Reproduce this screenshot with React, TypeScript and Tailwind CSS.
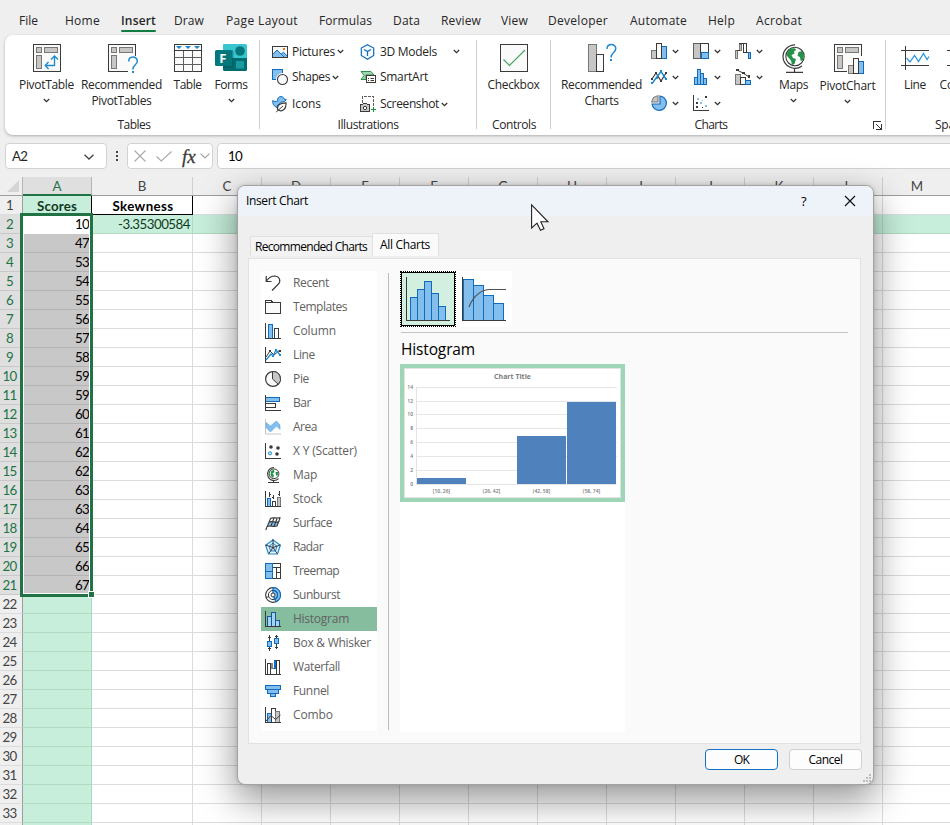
import { useLayoutEffect, useRef, useState } from "react";
import type { ReactNode } from "react";

const DARK = "#3b3a39";
const BLUE = "#0f6cbd";
const LIGHT = "#83beec";
const GREY = "#c8c6c4";

/* One line of text whose tracking is adjusted so that it spans w pixels. */
function T({ w, className = "", children }: { w: number; className?: string; children: string }) {
  const ref = useRef<HTMLSpanElement>(null);
  const [space, setSpace] = useState(0);
  useLayoutEffect(() => {
    if (ref.current) {
      setSpace((w - ref.current.getBoundingClientRect().width) / children.length);
    }
  }, [w, children]);
  return (
    <span ref={ref} style={{ letterSpacing: space }} className={`inline-block whitespace-nowrap ${className}`}>
      {children}
    </span>
  );
}

function Svg({ w, h, children, className = "", smooth = false }: { w: number; h: number; children: ReactNode; className?: string; smooth?: boolean }) {
  return (
    <svg
      width={w}
      height={h}
      viewBox={`0 0 ${w} ${h}`}
      fill="none"
      shapeRendering={smooth ? "auto" : "crispEdges"}
      className={`block shrink-0 overflow-visible ${className}`}
    >
      {children}
    </svg>
  );
}

function Chevron({ className = "" }: { className?: string }) {
  return (
    <Svg w={7} h={5} smooth className={className}>
      <path d="M0.8 1 L3.5 3.6 L6.2 1" stroke="#333" strokeWidth="1.3" />
    </Svg>
  );
}

/* ---------- ribbon icons ---------- */

function PivotBase() {
  return (
    <>
      <rect x="0.5" y="0.5" width="27" height="27" fill="#fafafa" stroke={DARK} />
      <rect x="3.5" y="3.5" width="5" height="5" fill={GREY} stroke="#797774" />
      <rect x="11.5" y="3.5" width="13" height="5" fill={GREY} stroke="#797774" />
      <rect x="3.5" y="11.5" width="5" height="13" fill={GREY} stroke="#797774" />
    </>
  );
}
const PivotTableIcon = () => (
  <Svg w={28} h={28}>
    <PivotBase />
    <g stroke="#1e8bcd" strokeWidth="1.4" shapeRendering="auto">
      <path d="M13 21.5 H21.5 V12.5" />
      <path d="M15.5 18 L12.3 21.5 L15.5 25" />
      <path d="M18 15.5 L21.5 12 L25 15.5" />
    </g>
  </Svg>
);
const RecPivotIcon = () => (
  <Svg w={27} h={28}>
    <PivotBase />
    <path d="M20 28 V17 L23 12 H29 V28 Z" fill="#fff" />
    <path d="M20.7 17.5 C20.7 11.8 29.3 11.6 29.3 17.2 C29.3 20.8 24.8 20.8 24.8 25.5" stroke="#1e8bcd" strokeWidth="1.5" shapeRendering="auto" />
    <rect x="24" y="27" width="2" height="2" fill="#1e8bcd" />
  </Svg>
);
const TableIcon = () => (
  <Svg w={28} h={28}>
    <rect x="0.5" y="0.5" width="27" height="27" fill="#fafafa" stroke={DARK} />
    <path d="M0 6.5 H28 M0 13.5 H28 M0 20.5 H28 M9.5 7 V28 M18.5 7 V28" stroke="#605e5c" />
    <path d="M0 6.5 H28" stroke={DARK} />
    <path d="M2 2 H8 L5 5 Z M11 2 H17 L14 5 Z M20 2 H26 L23 5 Z" fill="#1e8bcd" shapeRendering="auto" />
  </Svg>
);
const FormsIcon = () => (
  <Svg w={32} h={28} smooth>
    <path d="M9 0 H30.5 Q32 0 32 1.5 V14 H8 V1 Q8 0 9 0" fill="#37c6d0" />
    <path d="M8 14 H32 V25.5 Q32 27 30.5 27 H9.5 Q8 27 8 25.5 Z" fill="#026d71" />
    <circle cx="25" cy="7" r="4.8" fill="#08777c" />
    <rect x="21" y="17" width="8" height="7.5" rx="0.5" fill="#1a9ba1" />
    <path d="M8 6 H17 Q18.5 6 18.5 8 V22 Q18.5 24 17 24 H8 Z" fill="#02565a" opacity="0.5" />
    <rect x="0" y="6" width="17" height="16" rx="1.5" fill="#03787c" />
    <text x="4.3" y="18.6" fill="#fff" fontSize="13" fontWeight="700" fontFamily="Open Sans, sans-serif">F</text>
  </Svg>
);
const PicturesIcon = () => (
  <Svg w={16} h={14} smooth>
    <rect x="0.5" y="1.5" width="15" height="11" fill="#fafafa" stroke={DARK} />
    <path d="M1 9 L5 4.8 L11 12 H1 Z" fill={LIGHT} />
    <path d="M9 9 L11.5 7.5 L15 11 V12 H11 Z" fill={LIGHT} />
    <path d="M1 9.2 L5 5 L12 12 M9.2 9.2 L11.5 7.2 L15 11" stroke={BLUE} />
    <rect x="11" y="3" width="2" height="2" fill="#e8742a" />
  </Svg>
);
const ShapesIcon = () => (
  <Svg w={16} h={16}>
    <rect x="0.5" y="0.5" width="10" height="10" fill={LIGHT} stroke={BLUE} />
    <circle cx="10.5" cy="10.5" r="6.5" fill="#fff" shapeRendering="auto" />
    <circle cx="10.5" cy="10.5" r="5" fill="#fafafa" stroke={DARK} strokeWidth="1.1" shapeRendering="auto" />
  </Svg>
);
const IconsIcon = () => (
  <Svg w={16} h={16} smooth>
    <path d="M0.7 4.5 C2 5.5 4 5.8 5.8 5 C5 2 7 0.6 9 0.6 C11 0.6 11.8 2 12 3 L14.3 3.6 L12.5 5.5 C9 5.5 6 7.5 5 11.5 C2 10.5 0.3 7.5 0.7 4.5 Z" fill={LIGHT} stroke={BLUE} />
    <path d="M14 6.8 C7.5 7 4.5 9.5 5.7 13.8 C9 16 14.5 14.5 14 6.8 Z" fill="#fff" stroke={DARK} strokeWidth="1.2" />
    <path d="M4.2 16 L11 10" stroke={DARK} />
  </Svg>
);
const ModelsIcon = () => (
  <Svg w={15} h={16} smooth>
    <path d="M7.5 0.8 L13.7 4 V11.4 L7.5 15.2 L1.3 11.4 V4 Z" fill="#f7fbfe" stroke={BLUE} strokeWidth="1.2" />
    <path d="M4 5.5 L7.5 7.5 L11 5.5 M7.5 7.5 V12" stroke={BLUE} strokeWidth="1.2" />
  </Svg>
);
const SmartArtIcon = () => (
  <Svg w={16} h={14} smooth>
    <path d="M1 1.5 H11 L14 5 H6 V9.5 H1 L4.2 5.5 Z" fill="#9fd6ae" stroke="#2d8f4e" />
    <rect x="6.5" y="5.5" width="9" height="7" fill="#fff" stroke={DARK} />
    <path d="M8 8.5 H9 M10.5 8.5 H14 M8 10.5 H9 M10.5 10.5 H14" stroke={DARK} />
  </Svg>
);
const ScreenshotIcon = () => (
  <Svg w={16} h={16}>
    <path d="M2.5 7 V0.5 H13.5 V10" stroke="#605e5c" strokeDasharray="3 1" />
    <path d="M0.5 8.5 H2.5 L3.5 7.5 H6.5 L7.5 8.5 H9.5 V15.5 H0.5 Z" fill={GREY} stroke={DARK} />
    <circle cx="5" cy="12" r="1.7" fill="#fff" stroke={DARK} shapeRendering="auto" />
    <path d="M11 13.5 H16 M13.5 11 V16" stroke="#1d9440" />
  </Svg>
);
const CheckboxIcon = () => (
  <Svg w={28} h={28}>
    <rect x="0.5" y="0.5" width="27" height="27" fill="#fafafa" stroke={DARK} />
    <path d="M3.5 15.5 L9.5 21.5 L25 6" stroke="#45a562" strokeWidth="1.2" shapeRendering="auto" />
  </Svg>
);
const RecChartsIcon = () => (
  <Svg w={28} h={28}>
    <rect x="0.5" y="0.5" width="8" height="27" fill={GREY} stroke="#797774" />
    <rect x="8.5" y="10.5" width="7" height="17" fill="#fafafa" stroke={DARK} />
    <path d="M19 5 C19 -0.8 27.8 -0.8 27.8 4.6 C27.8 8.6 23 8.4 23 13.5" stroke="#1e8bcd" strokeWidth="1.5" shapeRendering="auto" />
    <rect x="22" y="15" width="2" height="2" fill="#1e8bcd" />
  </Svg>
);
const ColumnChartIcon = () => (
  <Svg w={16} h={16}>
    <rect x="0.5" y="7.5" width="5" height="8" fill={GREY} stroke="#797774" />
    <rect x="10.5" y="3.5" width="5" height="12" fill={LIGHT} stroke={BLUE} />
    <rect x="5.5" y="0.5" width="5" height="15" fill="#fafafa" stroke={DARK} />
  </Svg>
);
const TreemapChartIcon = () => (
  <Svg w={16} h={16}>
    <rect x="0.5" y="0.5" width="7" height="15" fill={GREY} stroke="#605e5c" />
    <rect x="7.5" y="0.5" width="8" height="9" fill="#fafafa" stroke={DARK} />
    <rect x="8.5" y="9.5" width="7" height="6" fill={LIGHT} stroke={BLUE} />
  </Svg>
);
const WaterfallChartIcon = () => (
  <Svg w={16} h={16}>
    <rect x="0.5" y="7.5" width="2" height="8" fill={GREY} stroke="#797774" />
    <rect x="4.5" y="1.5" width="2" height="6" fill={GREY} stroke="#797774" />
    <path d="M4 0.5 H11.5 M2 7.5 H5 M8.5 0.5 V9.5 H11.5 V0.5 M11 9.5 H14" stroke={DARK} />
    <rect x="13.5" y="9.5" width="2" height="6" fill={LIGHT} stroke={BLUE} />
  </Svg>
);
const LineChartIcon = () => (
  <Svg w={16} h={15} smooth>
    <path d="M1 9 L5 3 L10 11 L15 3" stroke={DARK} strokeWidth="1.2" />
    <path d="M1 13.5 L10 1.5 L15 9" stroke="#1e8bcd" strokeWidth="1.5" />
    <path d="M4 2h2v2h-2z M9 10h2v2h-2z M14 2h2v2h-2z M0 8h2v2h-2z" fill={DARK} />
    <path d="M9 0h2v2h-2z M14 8h2v2h-2z M0 12h2v2h-2z M5 7h2v2h-2z" fill="#1e8bcd" />
  </Svg>
);
const HistChartIcon = () => (
  <Svg w={14} h={16}>
    <path d="M1.5 15.5 V8.5 H4.5 V15.5 Z M4.5 15.5 V0.5 H7.5 V15.5 Z M7.5 15.5 V4.5 H10.5 V15.5 Z M10.5 15.5 V9.5 H13.5 V15.5 Z" fill={LIGHT} stroke={BLUE} />
  </Svg>
);
const ComboChartIcon = () => (
  <Svg w={16} h={16}>
    <rect x="0.5" y="5.5" width="5" height="10" fill={GREY} stroke="#797774" />
    <rect x="5.5" y="8.5" width="5" height="7" fill="#fafafa" stroke={DARK} />
    <rect x="10.5" y="11.5" width="5" height="4" fill={LIGHT} stroke={BLUE} />
    <path d="M2 1 L8 4 L14 8" stroke={DARK} shapeRendering="auto" />
    <path d="M1 0h3v2h-3z M7 3h3v2h-3z M13 6h2v3h-2z" fill={DARK} />
  </Svg>
);
const PieChartIcon = () => (
  <Svg w={16} h={16} smooth>
    <path d="M9 1 A7.2 7.2 0 1 1 1 9 H9 Z" fill={LIGHT} stroke={BLUE} strokeWidth="1.2" />
    <path d="M7 7 H0.7 A7 7 0 0 1 7 0.7 Z" fill={GREY} stroke="#797774" strokeWidth="1.1" />
  </Svg>
);
const ScatterChartIcon = () => (
  <Svg w={16} h={16}>
    <path d="M0.5 0 V15.5 H16" stroke={DARK} />
    <path d="M3 7h2v2h-2z M12 1h2v2h-2z M3 11h2v2h-2z M9 12h1v1h-1z" fill={DARK} />
    <path d="M4 3h2v2h-2z M7 7h2v2h-2z M9 5h1v1h-1z M12 10h2v2h-2z" fill={LIGHT} />
  </Svg>
);
function Globe({ w, h }: { w: number; h: number }) {
  return (
    <svg width={w} height={h} viewBox="0 0 24 29" fill="none" className="block shrink-0 overflow-visible">
      <circle cx="13" cy="12.5" r="9.2" fill="#fff" stroke={DARK} strokeWidth="1.1" />
      <path d="M8 5 C11 3.5 14 4 14 6 L12 7.5 L12.5 9.5 L9.5 11 L11 14 L14 15 L12.5 20 L10 21 L9 16.5 L5 12 C4.5 9 6 6.5 8 5 Z M16.5 8 L20 7 C22 10 22.5 13 20.5 17 L18.5 16.5 L18 13 L15.5 12 Z" fill="#239449" />
      <path d="M13 0.8 A12 12 0 0 0 1 12.5 A12 12 0 0 0 20 22" stroke={DARK} strokeWidth="1.2" />
      <path d="M12.5 24.5 V28 M4 28.3 H21" stroke={DARK} strokeWidth="1.2" />
    </svg>
  );
}
const MapTypeIcon = () => (
  <Svg w={16} h={16} smooth>
    <circle cx="9" cy="6.8" r="4.9" fill="#fff" stroke={DARK} />
    <path d="M6 4 L9 2.8 L9.5 5 L7.5 6.5 L9 8.5 L8 11 L5.5 8.5 Z M10.5 5 L13 5 L12.8 8.5 L11 8.5 Z" fill="#239449" />
    <path d="M9 0.5 A6.5 6.5 0 1 0 13.6 11.6 M8.5 13 V15 M3 15.5 H14" stroke={DARK} strokeWidth="1.1" />
  </Svg>
);
const PivotChartIcon = () => (
  <Svg w={28} h={30}>
    <PivotBase />
    <path d="M13 31 V19 H18 V12 H31 V31 Z" fill="#fff" />
    <rect x="14.5" y="21.5" width="5" height="8" fill={GREY} stroke="#797774" />
    <rect x="24.5" y="17.5" width="5" height="12" fill={LIGHT} stroke={BLUE} />
    <rect x="19.5" y="14.5" width="5" height="15" fill="#fafafa" stroke={DARK} />
  </Svg>
);
const SparkLineIcon = () => (
  <Svg w={28} h={24}>
    <path d="M0 6.5 H28 M0 21.5 H28 M4.5 2 V26" stroke={DARK} />
    <path d="M5.5 14 L9 18 L13.5 11.5 L17.5 17.5 L22.5 9.5 L26 15.5 L28 12.5" stroke="#2f96dc" strokeWidth="1.3" shapeRendering="auto" />
  </Svg>
);

/* ---------- ribbon ---------- */

const ribbonTabs: { label: string; text: number; cell: number }[] = [
  { label: "File", text: 19, cell: 46 },
  { label: "Home", text: 35, cell: 56 },
  { label: "Insert", text: 35, cell: 53 },
  { label: "Draw", text: 30, cell: 52 },
  { label: "Page Layout", text: 72, cell: 93 },
  { label: "Formulas", text: 53, cell: 74 },
  { label: "Data", text: 27, cell: 48 },
  { label: "Review", text: 40, cell: 60 },
  { label: "View", text: 27, cell: 47 },
  { label: "Developer", text: 60, cell: 82 },
  { label: "Automate", text: 57, cell: 78 },
  { label: "Help", text: 27, cell: 48 },
  { label: "Acrobat", text: 46, cell: 60 },
];

function BigButton({ icon, lines, width, arrow = false, drop = false }: { icon: ReactNode; lines: [string, number][]; width: string; arrow?: boolean; drop?: boolean }) {
  return (
    <div className={`flex shrink-0 flex-col items-center ${width}`}>
      <div className={`flex items-start justify-center ${drop ? "h-[34px]" : "h-[33px]"}`}>{icon}</div>
      {lines.map(([t, w]) => (
        <div key={t} className="flex h-4 items-center justify-center">
          <T w={w}>{t}</T>
        </div>
      ))}
      {arrow && <Chevron className="mt-[5px]" />}
    </div>
  );
}

function SmallButton({ icon, label, w, gap }: { icon: ReactNode; label: string; w: number; gap?: string }) {
  return (
    <div className="flex h-[26px] items-center">
      <div className="flex w-5 items-center">{icon}</div>
      <T w={w}>{label}</T>
      {gap && <Chevron className={gap} />}
    </div>
  );
}

function Group({ width, label, w, children, pad = "" }: { width: string; label: string; w: number; children: ReactNode; pad?: string }) {
  return (
    <div className={`relative flex shrink-0 flex-col ${width}`}>
      <div className="flex h-[82px] pt-[9px]">{children}</div>
      <div className={`flex h-4 items-center justify-center ${pad}`}>
        <T w={w}>{label}</T>
      </div>
    </div>
  );
}
const Divider = () => <div className="mt-[5px] h-[89px] w-px shrink-0 bg-[#cfcfcf]" />;

function IconMenu({ icon }: { icon: ReactNode }) {
  return (
    <div className="flex h-[26px] w-[42px] items-center">
      <div className="w-[21px]">{icon}</div>
      <Chevron />
    </div>
  );
}

function Ribbon() {
  return (
    <div className="flex h-[100px] w-[960px] shrink-0 rounded-lg bg-white shadow-[0_1px_3px_rgba(0,0,0,0.28)]">
      <Group width="w-[254px]" label="Tables" w={33} pad="pl-[4px]">
        <BigButton width="w-[83px]" icon={<PivotTableIcon />} lines={[["PivotTable", 55]]} arrow />
        <BigButton width="w-[67px]" icon={<RecPivotIcon />} lines={[["Recommended", 81], ["PivotTables", 60]]} />
        <BigButton width="w-[65px]" icon={<TableIcon />} lines={[["Table", 28]]} />
        <BigButton width="w-[22px]" icon={<FormsIcon />} lines={[["Forms", 33]]} arrow />
      </Group>
      <Divider />
      <Group width="w-[216px]" label="Illustrations" w={61}>
        <div className="-mt-[5px] flex w-[88px] flex-col pl-3">
          <SmallButton icon={<PicturesIcon />} label="Pictures" w={43} gap="ml-[2px]" />
          <SmallButton icon={<ShapesIcon />} label="Shapes" w={38} gap="ml-[2px]" />
          <div className="pt-px"><SmallButton icon={<IconsIcon />} label="Icons" w={29} /></div>
        </div>
        <div className="-mt-[5px] flex w-[128px] flex-col pl-3">
          <SmallButton icon={<ModelsIcon />} label="3D Models" w={57} gap="ml-[16px]" />
          <SmallButton icon={<SmartArtIcon />} label="SmartArt" w={48} />
          <div className="pt-px"><SmallButton icon={<ScreenshotIcon />} label="Screenshot" w={59} gap="ml-[2px]" /></div>
        </div>
      </Group>
      <Divider />
      <Group width="w-[73px]" label="Controls" w={44} pad="pl-px">
        <BigButton width="w-[73px]" icon={<CheckboxIcon />} lines={[["Checkbox", 52]]} />
      </Group>
      <Divider />
      <Group width="w-[334px]" label="Charts" w={33} pad="pr-[14px]">
        <BigButton width="w-[101px]" icon={<RecChartsIcon />} lines={[["Recommended", 81], ["Charts", 34]]} />
        <div className="-mt-[6px] -ml-px grid h-[78px] w-[126px] grid-cols-3">
          <IconMenu icon={<ColumnChartIcon />} />
          <IconMenu icon={<TreemapChartIcon />} />
          <IconMenu icon={<WaterfallChartIcon />} />
          <IconMenu icon={<LineChartIcon />} />
          <IconMenu icon={<HistChartIcon />} />
          <IconMenu icon={<ComboChartIcon />} />
          <IconMenu icon={<PieChartIcon />} />
          <IconMenu icon={<ScatterChartIcon />} />
        </div>
        <BigButton width="w-[33px]" icon={<Globe w={24} h={29} />} lines={[["Maps", 29]]} arrow />
        <BigButton width="w-[75px]" icon={<PivotChartIcon />} lines={[["PivotChart", 56]]} arrow drop />
        <Svg w={9} h={9} className="absolute right-[3px] bottom-[5px]">
          <path d="M0.5 8 V0.5 H8 M8.5 3 V8.5 H3 M3 3 L8 8" stroke="#333" />
        </Svg>
      </Group>
      <Divider />
      <div className="flex w-[120px] flex-col">
        <div className="flex h-[82px] pt-[9px]">
          <BigButton width="w-[58px]" icon={<SparkLineIcon />} lines={[["Line", 22]]} />
          <BigButton width="w-[34px]" icon={<SparkLineIcon />} lines={[["Column", 43]]} />
        </div>
        <div className="flex h-4 items-center pl-[49px]">
          <T w={55}>Sparklines</T>
        </div>
      </div>
    </div>
  );
}

/* ---------- formula bar ---------- */

function FormulaBar() {
  return (
    <div className="flex h-[26px] w-[960px] shrink-0 items-center text-[12px]">
      <div className="flex h-[26px] w-[102px] items-center justify-between rounded border border-[#d2d2d2] bg-white pr-3 pl-[6px]">
        <T w={15} className="pt-px font-[Lato,sans-serif] text-[13.3px]">A2</T>
        <Svg w={10} h={6} smooth className="mt-[2px]"><path d="M0.5 0.7 L5 5 L9.5 0.7" stroke="#444" strokeWidth="1.3" /></Svg>
      </div>
      <div className="flex w-5 flex-col items-center gap-[2px]">
        <div className="size-[2px] bg-[#444]" />
        <div className="size-[2px] bg-[#444]" />
        <div className="size-[2px] bg-[#444]" />
      </div>
      <div className="flex h-[26px] w-[86px] items-center rounded border border-[#d2d2d2] bg-white pl-[6px]">
        <Svg w={12} h={12} smooth><path d="M0.5 0.5 L11.5 11.5 M11.5 0.5 L0.5 11.5" stroke="#a9a9a9" strokeWidth="1.1" /></Svg>
        <Svg w={16} h={11} smooth className="ml-[10px]"><path d="M0.5 5.5 L5.3 10 L15.5 0.5" stroke="#a9a9a9" strokeWidth="1.1" /></Svg>
        <span className="ml-[10px] w-[14px] font-['Liberation_Serif',serif] text-[19px] leading-none text-[#3b3a39] italic [-webkit-text-stroke:0.3px_#3b3a39]">fx</span>
        <Svg w={10} h={6} smooth className="ml-[4px]"><path d="M0.5 0.7 L5 5 L9.5 0.7" stroke="#a0a0a0" strokeWidth="1.1" /></Svg>
      </div>
      <div className="ml-1 flex h-[26px] flex-1 items-center rounded border border-[#d2d2d2] bg-white pt-px pl-[10px]">
        <T w={14} className="font-[Lato,sans-serif] text-[13.3px] text-black">10</T>
      </div>
    </div>
  );
}

/* ---------- sheet ---------- */

const scores = [10, 47, 53, 54, 55, 56, 57, 58, 59, 59, 60, 61, 62, 62, 63, 63, 64, 65, 66, 67];
const otherColumns = ["C", "D", "E", "F", "G", "H", "I", "J", "K", "L", "M"];
const rows = Array.from({ length: 34 }, (_, i) => i + 1);

function ScoreCell({ n }: { n: number }) {
  if (n === 1) {
    return (
      <div className="flex w-[69px] shrink-0 items-center justify-center border-r border-b border-black bg-[#c6eeda] pt-[3px] font-bold text-[#12391f]">
        <T w={40}>Scores</T>
      </div>
    );
  }
  if (n > 21) {
    return <div className="w-[69px] shrink-0 border-r border-b border-[#b0d9c2] bg-[#c6eeda]" />;
  }
  return (
    <div className={`flex w-[69px] shrink-0 items-center justify-end border-b pt-[2px] pr-[3px] text-black ${n === 2 ? "border-white bg-white" : "border-[#b3b3b3] bg-[#c8c8c8]"}`}>
      <T w={14}>{String(scores[n - 2])}</T>
    </div>
  );
}

function SheetRow({ n }: { n: number }) {
  const picked = n >= 2 && n <= 21;
  const cell = n === 2 ? "border-[#b0d9c2] bg-[#c6eeda]" : "border-[#dcdcdc] bg-white";
  return (
    <div className="flex h-[19px] shrink-0">
      <div className={`flex w-[23px] shrink-0 items-center justify-center border-r border-b border-r-[#9d9d9d] pt-[2px] pr-[3px] ${picked ? "border-b-[#c8c8c8] bg-[#dfdfdf] text-[#217346]" : "border-b-[#dcdcdc] bg-[#efefef] text-[#444]"}`}>
        {n < 34 && <T w={n < 10 ? 7 : 14}>{String(n)}</T>}
      </div>
      <ScoreCell n={n} />
      {n === 1 ? (
        <div className="flex w-[101px] shrink-0 items-center justify-center border-r border-b border-black bg-white pt-[3px] pl-[2px] font-bold text-black">
          <T w={61}>Skewness</T>
        </div>
      ) : (
        <div className={`flex w-[101px] shrink-0 items-center justify-end border-r border-b pt-[2px] pr-[2px] text-[#12391f] ${cell}`}>
          {n === 2 && <T w={72}>-3.35300584</T>}
        </div>
      )}
      {otherColumns.map((c) => (
        <div key={c} className={`w-[69px] shrink-0 border-r border-b ${cell}`} />
      ))}
    </div>
  );
}

function Sheet() {
  return (
    <div className="relative mt-2 w-[960px] font-[Lato,sans-serif] text-[13.3px] leading-none">
      <div className="flex h-[19px] border-b border-[#9d9d9d] text-[#444]">
        <div className="flex w-[23px] shrink-0 items-end justify-end border-r border-[#b5b5b5] pr-[3px] pb-[3px]">
          <Svg w={12} h={12} smooth><path d="M12 0 V12 H0 Z" fill="#d5d5d5" /></Svg>
        </div>
        <div className="flex h-[19px] w-[69px] shrink-0 items-center justify-center border-r border-b-2 border-r-[#b5b5b5] border-b-[#217346] bg-[#dfdfdf] pt-[3px] text-[#217346]">A</div>
        <div className="flex w-[101px] shrink-0 items-center justify-center border-r border-[#cfcfcf] pt-[2px]">B</div>
        {otherColumns.map((c) => (
          <div key={c} className="flex w-[69px] shrink-0 items-center justify-center border-r border-[#cfcfcf] pt-[2px]">{c}</div>
        ))}
      </div>
      {rows.map((n) => (
        <SheetRow key={n} n={n} />
      ))}
      <div className="absolute top-[36px] left-[20px] h-[384px] w-[73px] border-3 border-[#217346]">
        <div className="size-full border border-white" />
      </div>
      <div className="absolute top-[414px] left-[88px] size-[7px] border border-white bg-[#217346]" />
    </div>
  );
}

/* ---------- chart type icons ---------- */

const Axes = ({ c = DARK }: { c?: string }) => <path d="M0.5 0 V15.5 H16" stroke={c} />;

const typeIcons: Record<string, ReactNode> = {
  Recent: (
    <Svg w={16} h={16} smooth>
      <path d="M1.2 1 V6.5 H6.5 M1.5 6 C4 2 7 1 10 1 C14.5 1.5 16.5 6 13 9.5 L7 15.5" stroke={DARK} strokeWidth="1.2" />
    </Svg>
  ),
  Templates: (
    <Svg w={16} h={14}>
      <path d="M0.5 13.5 V0.5 H6.5 L7.5 2.5 H15.5 V13.5 Z" fill="#fafafa" stroke={DARK} />
      <path d="M0.5 2.5 H7.5" stroke={DARK} />
    </Svg>
  ),
  Column: (
    <Svg w={16} h={16}>
      <rect x="3.5" y="1.5" width="4" height="14" fill={LIGHT} stroke={BLUE} />
      <rect x="9.5" y="5.5" width="4" height="10" fill="#fff" stroke={DARK} />
      <Axes />
    </Svg>
  ),
  Line: (
    <Svg w={16} h={16}>
      <Axes />
      <g shapeRendering="auto">
        <path d="M1 10 L5 4 L9 8 L15 3" stroke={DARK} />
        <path d="M1 13 L6 7 L8 9 L11 3 L15 8" stroke="#1e8bcd" strokeWidth="1.3" />
      </g>
      <path d="M4 3h2v2h-2z M14 3h2v2h-2z" fill={DARK} />
      <path d="M10 2h2v2h-2z M14 7h2v2h-2z M7 8h2v2h-2z" fill="#1e8bcd" />
    </Svg>
  ),
  Pie: (
    <Svg w={16} h={16} smooth>
      <circle cx="8" cy="8" r="7.4" fill="#fafafa" stroke={DARK} strokeWidth="1.2" />
      <path d="M7.5 0.6 A7.4 7.4 0 0 1 13.3 13.3 L7.5 8 Z" fill={GREY} stroke={DARK} />
    </Svg>
  ),
  Bar: (
    <Svg w={16} h={16}>
      <rect x="0.5" y="2.5" width="14" height="4" fill={LIGHT} stroke={BLUE} />
      <rect x="0.5" y="8.5" width="10" height="4" fill="#fff" stroke={DARK} />
      <Axes />
    </Svg>
  ),
  Area: (
    <Svg w={16} h={16} smooth>
      <path d="M0.5 0 V15 H16" stroke={GREY} />
      <path d="M1 3.5 L5.5 7 L11.5 2 L15 6 V10.5 L11.5 7 L5.5 13 L1 8.5 Z" fill={LIGHT} stroke="#5aa7dd" strokeWidth="0.6" />
    </Svg>
  ),
  "X Y (Scatter)": (
    <Svg w={16} h={16}>
      <Axes />
      <g shapeRendering="auto">
        <circle cx="6" cy="4" r="1.8" fill={DARK} />
        <circle cx="13" cy="5" r="1.8" fill={DARK} />
        <circle cx="12" cy="11" r="1.8" fill={DARK} />
        <circle cx="5" cy="10.3" r="1.6" fill="#d5eafa" stroke="#1e8bcd" />
      </g>
    </Svg>
  ),
  Map: <MapTypeIcon />,
  Stock: (
    <Svg w={16} h={16}>
      <rect x="2.5" y="7.5" width="3" height="8" fill={LIGHT} stroke={BLUE} />
      <rect x="7.5" y="10.5" width="3" height="5" fill="#fff" stroke={DARK} />
      <rect x="12.5" y="6.5" width="3" height="9" fill={GREY} stroke="#797774" />
      <path d="M4.5 1 V6 M4 3.5 H6 M8.5 4 V8 M7 6.5 H9 M14.5 0 V5 M13 3.5 H15" stroke={DARK} />
      <Axes />
    </Svg>
  ),
  Surface: (
    <Svg w={16} h={16} smooth>
      <path d="M3 10 L4.5 7 L14 6.5 L12 11.5 H2 Z" fill={LIGHT} />
      <path d="M0.8 15 L5.5 3.5 C8 1.5 11 4 15.5 2.5 M3.5 7.5 C7 5 10 8.5 14.5 6.5 M1.5 12 C5 9.5 8 12.5 12 11 L15 3 M6 11 L9 3 M9 11.5 L12 3.5" stroke={DARK} strokeWidth="1.1" />
    </Svg>
  ),
  Radar: (
    <Svg w={16} h={16} smooth>
      <path d="M8 1 L15.3 6.3 L12.5 15 H3.5 L0.7 6.3 Z" fill="#eaf5fc" stroke="#1e8bcd" strokeWidth="1.2" />
      <path d="M8 4 L12 7.3 L10.5 12 H5.5 L4 7.3 Z" fill="#c9e3f7" stroke="#1e8bcd" />
      <path d="M8 0 V8.5 M0.5 6 L8 8.5 L15.5 6 M3.5 15 L8 8.5 L12.5 15" stroke={DARK} />
    </Svg>
  ),
  Treemap: (
    <Svg w={16} h={16}>
      <rect x="0.5" y="0.5" width="15" height="15" fill="#fff" stroke={DARK} />
      <path d="M7.5 4.5 H15.5 M11.5 4.5 V15.5 M12 9.5 H15.5" stroke={DARK} />
      <path d="M0.5 0.5 H7.5 V15.5 H0.5 Z M0.5 8.5 H7.5" fill={LIGHT} stroke={BLUE} />
    </Svg>
  ),
  Sunburst: (
    <Svg w={16} h={16} smooth>
      <circle cx="8" cy="8" r="7.4" fill="#fff" stroke={DARK} strokeWidth="1.1" />
      <path d="M8 0.6 A7.4 7.4 0 0 1 11 14.8 L8 8 Z" fill={LIGHT} stroke={BLUE} strokeWidth="1.2" />
      <circle cx="8" cy="8" r="4.6" stroke={DARK} />
      <path d="M8 3.4 A4.6 4.6 0 0 1 9.8 12.2 L9 10" stroke={BLUE} strokeWidth="1.2" />
      <circle cx="8" cy="8" r="2" fill="#fff" stroke={DARK} />
      <path d="M1 10.5 L4 9.5" stroke={DARK} />
    </Svg>
  ),
  Histogram: (
    <Svg w={16} h={16}>
      <path d="M2.5 15.5 V5.5 H6.5 V15.5 Z M6.5 15.5 V1.5 H10.5 V15.5 Z M10.5 15.5 V9.5 H14.5 V15.5 Z" fill="#a5d2f0" stroke="#125a97" />
      <Axes />
    </Svg>
  ),
  "Box & Whisker": (
    <Svg w={16} h={16}>
      <path d="M4.5 0 V16 M11.5 0 V14 M3 2.5 H6 M3 13.5 H6 M10 1.5 H13 M10 12.5 H13" stroke={DARK} />
      <rect x="2.5" y="6.5" width="4" height="5" fill={LIGHT} stroke={BLUE} />
      <rect x="9.5" y="3.5" width="4" height="5" fill={LIGHT} stroke={BLUE} />
    </Svg>
  ),
  Waterfall: (
    <Svg w={16} h={16}>
      <path d="M2.5 15.5 V4.5 H5.5 V15.5 M11.5 15.5 V1.5 H14.5 V15.5 M5.5 4.5 H8 M10 1.5 H15" stroke={DARK} />
      <rect x="6" y="4" width="2" height="6" fill="#8a8886" />
      <rect x="9" y="1" width="2" height="9" fill={BLUE} />
      <rect x="8" y="9" width="1" height="1" fill={BLUE} />
      <Axes />
    </Svg>
  ),
  Funnel: (
    <Svg w={16} h={14}>
      <rect x="5.5" y="9.5" width="5" height="3" fill={LIGHT} stroke={BLUE} />
      <rect x="2.5" y="5.5" width="11" height="4" fill={LIGHT} stroke={BLUE} />
      <rect x="0.5" y="1.5" width="15" height="4" fill={LIGHT} stroke={BLUE} />
    </Svg>
  ),
  Combo: (
    <Svg w={16} h={16}>
      <rect x="2.5" y="6.5" width="4" height="9" fill={LIGHT} stroke={BLUE} />
      <rect x="6.5" y="1.5" width="4" height="14" fill="#fff" stroke={DARK} />
      <rect x="10.5" y="4.5" width="4" height="11" fill={GREY} stroke="#797774" />
      <path d="M1 14 L6 8.5 L10.5 12.5 L15.5 8" stroke={DARK} shapeRendering="auto" />
      <Axes />
    </Svg>
  ),
};

const chartTypes: [string, number][] = [
  ["Recent", 36],
  ["Templates", 54],
  ["Column", 43],
  ["Line", 22],
  ["Pie", 16],
  ["Bar", 18],
  ["Area", 24],
  ["X Y (Scatter)", 64],
  ["Map", 24],
  ["Stock", 29],
  ["Surface", 39],
  ["Radar", 30],
  ["Treemap", 46],
  ["Sunburst", 47],
  ["Histogram", 56],
  ["Box & Whisker", 78],
  ["Waterfall", 47],
  ["Funnel", 36],
  ["Combo", 40],
];

/* ---------- dialog ---------- */

const gridLines = [19, 33, 46, 60, 74, 88, 102, 116];
const gridLabels = ["14", "12", "10", "8", "6", "4", "2", "0"];

function Preview() {
  return (
    <div className="h-[138px] w-[225px] border-4 border-[#9ed5b7] bg-white">
      <svg width="217" height="130" viewBox="0 0 217 130" shapeRendering="crispEdges" className="block font-['Open_Sans',sans-serif]">
        <rect x="0.5" y="0.5" width="216" height="129" fill="#fff" stroke="#e3e3e3" />
        <text x="108.5" y="11" textAnchor="middle" fontSize="7" fontWeight="700" fill="#7c7c7c">Chart Title</text>
        {gridLines.map((y, i) => (
          <g key={y}>
            <path d={`M12 ${y + 0.5} H213`} stroke="#e6e6e6" />
            <text x="9" y={y + 2.2} textAnchor="end" fontSize="5" fontWeight="600" fill="#777">{gridLabels[i]}</text>
          </g>
        ))}
        <path d="M12.5 19 V117" stroke="#e3e3e3" />
        <rect x="13" y="110" width="49" height="6" fill="#4f81bd" />
        <rect x="113" y="68" width="49" height="48" fill="#4f81bd" />
        <rect x="163" y="34" width="49" height="82" fill="#4f81bd" />
        <g fontSize="5" fontWeight="600" fill="#777" textAnchor="middle">
          <text x="37.5" y="125">[10, 26]</text>
          <text x="87.5" y="125">(26, 42]</text>
          <text x="137.5" y="125">(42, 58]</text>
          <text x="187.5" y="125">(58, 74]</text>
        </g>
      </svg>
    </div>
  );
}

function Dialog() {
  return (
    <div className="absolute top-[185px] left-[237px] flex h-[600px] w-[637px] flex-col rounded-lg border border-[#a2a2a2] bg-[#efefef] text-[12px] text-black shadow-[0_14px_36px_2px_rgba(0,0,0,0.4),0_0_4px_rgba(0,0,0,0.15)]">
      <div className="flex h-[30px] shrink-0 items-center rounded-t-[7px] bg-[#edf3f8] pl-2">
        <T w={62}>Insert Chart</T>
        <span className="ml-auto w-[44px] text-[13px] font-medium">?</span>
        <Svg w={10} h={10} smooth className="mt-[-1px] mr-[18px]"><path d="M0 0 L10 10 M10 0 L0 10" stroke="#111" strokeWidth="1.2" /></Svg>
      </div>
      <div className="flex h-[42px] shrink-0 items-end pb-[2px] pl-3">
        <div className="flex h-[20px] w-[122px] items-center border-t border-l border-[#e0e0e0] bg-[#f3f3f3] pl-[4px]">
          <T w={112}>Recommended Charts</T>
        </div>
        <div className="flex h-[23px] w-[67px] items-center border border-b-0 border-[#e0e0e0] bg-[#fafafa] pl-[7px]">
          <T w={50}>All Charts</T>
        </div>
      </div>
      <div className="ml-[10px] flex h-[486px] w-[613px] shrink-0 border border-[#e2e2e2] bg-[#fafafa] pt-3 pl-3">
        <div className="flex h-[460px] w-[116px] shrink-0 flex-col bg-white">
          {chartTypes.map(([name, w]) => (
            <div key={name} className={`flex h-6 shrink-0 items-center pl-1 text-[#626262] ${name === "Histogram" ? "bg-[#86bd9e]" : ""}`}>
              <div className="w-7">{typeIcons[name]}</div>
              <T w={w}>{name}</T>
            </div>
          ))}
        </div>
        <div className="mt-[2px] ml-[11px] h-[457px] w-px shrink-0 bg-[#bcbcbc]" />
        <div className="ml-[11px] flex flex-col">
          <div className="flex h-[56px] w-[112px] bg-white">
            <div className="flex size-[56px] items-start border border-dotted border-black bg-white">
              <div className="size-[54px] border border-black bg-[#d3efdf]">
                <Svg w={52} h={52}>
                  <path d="M8.5 47.5 V24.5 H15.5 V47.5 Z M15.5 47.5 V16.5 H22.5 V47.5 Z M22.5 47.5 V8.5 H29.5 V47.5 Z M29.5 47.5 V20.5 H36.5 V47.5 Z M36.5 47.5 V33.5 H43.5 V47.5 Z" fill={LIGHT} stroke={BLUE} />
                  <path d="M4.5 4 V47.5 H48" stroke={DARK} />
                </Svg>
              </div>
            </div>
            <Svg w={56} h={56}>
              <path d="M7.5 49.5 V8.5 H17.5 V49.5 Z M17.5 49.5 V14.5 H27.5 V49.5 Z M27.5 49.5 V24.5 H37.5 V49.5 Z M37.5 49.5 V32.5 H47.5 V49.5 Z" fill={LIGHT} stroke={BLUE} />
              <path d="M6.5 6 V49.5 H50" stroke={DARK} />
              <path d="M13 36 C18 23 27 18.5 34 18.5 H50" stroke="#505050" strokeWidth="1.2" shapeRendering="auto" />
            </Svg>
          </div>
          <div className="mt-[5px] ml-px h-px w-[447px] bg-[#c2c2c2]" />
          <div className="flex h-[31px] items-center pt-[3px] pl-px text-[15.5px]">
            <T w={74}>Histogram</T>
          </div>
          <Preview />
          <div className="h-[230px] w-[225px] bg-white" />
        </div>
      </div>
      <div className="flex items-start justify-end gap-[11px] pt-[5px] pr-[11px]">
        <button className="flex h-[21px] w-[73px] items-center justify-center rounded border border-[#1273c5] bg-[#fdfdfd] pt-px"><T w={15}>OK</T></button>
        <button className="flex h-[21px] w-[73px] items-center justify-center rounded border border-[#cfcfcf] bg-[#fdfdfd] pt-px"><T w={34}>Cancel</T></button>
      </div>
      <Svg w={8} h={8} className="absolute right-[2px] bottom-[2px]">
        <path d="M6 0h2v2h-2z M3 3h2v2h-2z M6 3h2v2h-2z M0 6h2v2h-2z M3 6h2v2h-2z M6 6h2v2h-2z" fill="#bdbdbd" />
      </Svg>
    </div>
  );
}

export default function App() {
  return (
    <div className="relative flex h-[825px] w-[950px] flex-col overflow-hidden bg-[#efefef] font-['Open_Sans',sans-serif] text-[12px] leading-none text-[#262626]">
      <div className="flex h-[35px] shrink-0 pt-3 pl-[19px]">
        {ribbonTabs.map((t) => (
          <div key={t.label} className="flex shrink-0" style={{ width: t.cell }}>
            <div className="flex h-5 flex-col justify-between">
              <div className={`flex h-[17px] items-center ${t.label === "Insert" ? "font-semibold" : ""}`}>
                <T w={t.text}>{t.label}</T>
              </div>
              {t.label === "Insert" && <div className="h-[2px] rounded bg-[#107c41]" />}
            </div>
          </div>
        ))}
      </div>
      <div className="flex shrink-0 flex-col gap-2 pl-[5px]">
        <Ribbon />
        <FormulaBar />
      </div>
      <Sheet />
      <Dialog />
      <Svg w={18} h={27} smooth className="absolute top-[204px] left-[531px]">
        <path d="M0.6 0.8 V24 L6 19.2 L9.5 26.3 L13 24.8 L9.8 17.8 H17 Z" fill="#fff" stroke="#222" strokeWidth="1.1" />
      </Svg>
    </div>
  );
}
